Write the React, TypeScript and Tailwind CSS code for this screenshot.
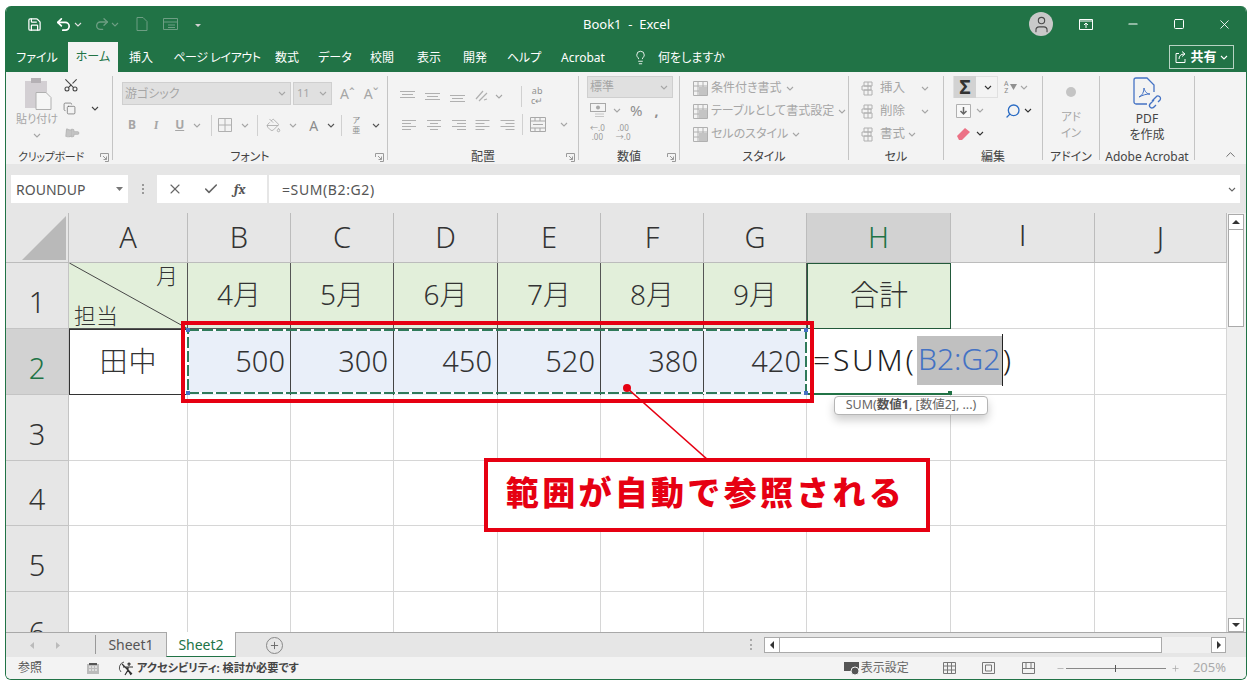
import React from "react";
import {
  ChevronUp,
  Copy,
  Lightbulb,
  Minus,
  PaintBucket,
  Paintbrush,
  Plus,
  Redo2,
  Save,
  Scissors,
  Search,
  Square,
  Undo2,
  User,
  X,
  Check,
} from "lucide-react";

const Chev = ({ c = "#a6a6a6" }: { c?: string }) => (
  <svg width="8" height="5" viewBox="0 0 8 5" className="shrink-0">
    <path d="M1 1l3 3 3-3" fill="none" stroke={c} strokeWidth="1.1" />
  </svg>
);

const Launcher = () => (
  <svg width="9" height="9" viewBox="0 0 9 9" className="absolute right-[3px] top-[8px]">
    <path d="M.5 4V.5H8.500V8.500H5M3 3l3.500 3.500M6.500 3.500v3h-3" fill="none" stroke="#9a9a9a" />
  </svg>
);

// three or so horizontal strokes, used by all the alignment buttons
const Lines = ({ rows, w = 15 }: { rows: number[][]; w?: number }) => (
  <svg width={w} height="13" viewBox="0 0 15 13" className="shrink-0">
    {rows.map((r, i) => (
      <path key={i} d={`M${r[0]} ${r[2]}H${r[1]}`} stroke="#b0b0b0" strokeWidth="1" />
    ))}
  </svg>
);

const top3 = [[0, 15, 1.5], [2, 13, 4.500], [0, 15, 7.500]];
const mid3 = [[0, 15, 3.500], [2, 13, 6.500], [0, 15, 9.500]];
const low3 = [[0, 15, 5.500], [2, 13, 8.500], [0, 15, 11.500]];
const left4 = [[0, 14, 2.500], [0, 9, 5.500], [0, 14, 8.500], [0, 9, 11.500]];
const center4 = [[0, 14, 2.500], [3, 11, 5.500], [0, 14, 8.500], [3, 11, 11.500]];
const right4 = [[0, 14, 2.500], [5, 14, 5.500], [0, 14, 8.500], [5, 14, 11.500]];

const Group = ({
  w,
  label,
  launcher,
  labelClass = "text-[12px]",
  children,
}: {
  w: string;
  label: string;
  launcher?: boolean;
  labelClass?: string;
  children: React.ReactNode;
}) => (
  <div className={`${w} h-[84px] shrink-0 border-r border-[#c4c4c4]`}>
    <div className="h-[69px]">{children}</div>
    <div className={`relative h-[24px] whitespace-nowrap text-center leading-[24px] text-[#444] ${labelClass}`}>
      {label}
      {launcher && <Launcher />}
    </div>
  </div>
);

const tabs = [
  { t: "ファイル", c: "w-[62px]" },
  { t: "ホーム", c: "w-[50px] h-[30px] bg-[#f3f3f3] text-[#217346]" },
  { t: "挿入", c: "w-[46px]" },
  { t: "ページ レイアウト", c: "ml-[3px] w-[100px] tracking-[-0.4px]" },
  { t: "数式", c: "w-[40px]" },
  { t: "データ", c: "w-[56px]" },
  { t: "校閲", c: "w-[38px]" },
  { t: "表示", c: "w-[56px]" },
  { t: "開発", c: "w-[36px]" },
  { t: "ヘルプ", c: "w-[62px]" },
  { t: "Acrobat", c: "w-[56px]" },
];

const TitleBar = () => (
  <div className="flex h-[36px] items-center bg-[#217346] text-white">
    <Save size={15} className="ml-[21px]" strokeWidth={2} />
    <Undo2 size={17} className="ml-[13px]" strokeWidth={2.4} />
    <div className="ml-[2px]"><Chev c="#e0e0e0" /></div>
    <Redo2 size={16} className="ml-[12px] text-[#6d9e83]" />
    <div className="ml-[1px]"><Chev c="#6d9e83" /></div>
    <svg width="12" height="14" viewBox="0 0 12 14" className="ml-[17px]">
      <path d="M1 .5h6l4 4v9H1z" fill="none" stroke="#6d9e83" />
    </svg>
    <svg width="15" height="12" viewBox="0 0 15 12" className="ml-[15px]">
      <path d="M.5.5h14v11H.5zM.5 4h14M5 7h7M5 9.500h7" fill="none" stroke="#6d9e83" />
    </svg>
    <svg width="6" height="6" viewBox="0 0 6 6" className="ml-[17px]">
      <path d="M0 1h6M0 3h6L3 6z" fill="#d0d0d0" />
    </svg>
    <span className="ml-[382px] w-[90px] whitespace-pre pt-[2px] text-[13px]">Book1  -  Excel</span>
    <div className="ml-[356px] flex h-[24px] w-[24px] items-center justify-center rounded-full bg-[#c9c9c9]">
      <User size={19} className="text-[#4a4a4a]" strokeWidth={1.4} />
    </div>
    <svg width="14" height="11" viewBox="0 0 14 11" className="ml-[26px]">
      <path d="M.5.500h13v10H.5zM.5 2h13M7 9V4M5 6l2-2 2 2" fill="none" stroke="#fff" />
    </svg>
    <Minus size={14} className="ml-[33px]" />
    <Square size={12} className="ml-[33px]" />
    <X size={15} className="ml-[32px]" strokeWidth={1.4} />
  </div>
);

const TabBar = () => (
  <div className="flex h-[30px] items-end bg-[#217346] text-[12px] text-white">
    {tabs.map((t) => (
      <div key={t.t} className={`flex h-[29px] items-center justify-center whitespace-pre ${t.c}`}>
        {t.t}
      </div>
    ))}
    <div className="flex h-[29px] items-center">
      <Lightbulb size={15} className="ml-[22px]" strokeWidth={1.4} />
      <span className="ml-[10px] w-[58px] whitespace-nowrap">何をしますか</span>
    </div>
    <div className="mb-[3px] ml-[453px] flex h-[24px] w-[65px] items-center justify-center gap-[3px] border border-[#b7d3c3]">
      <svg width="12" height="12" viewBox="0 0 12 12">
        <path d="M4 2.500H1v9h9V8M4 8c0-3 2-5 5-5M7 .5l3 2.500-3 2.500" fill="none" stroke="#fff" />
      </svg>
      <span className="text-[13px] font-bold">共有</span>
      <Chev c="#ffffff" />
    </div>
  </div>
);

const Ribbon = () => (
  <div className="flex h-[92px] bg-[#f3f3f3] pt-[4px] text-[#a6a6a6]">
    <Group w="w-[107px]" label="クリップボード" launcher labelClass="pr-[16px] text-[11px] tracking-[-0.3px]">
      <div className="flex">
        <div className="ml-[10px] flex w-[42px] flex-col items-center">
          <svg width="28" height="33" viewBox="0 0 28 33" className="ml-[3px] mt-[1px]">
            <rect x="0" y="4" width="22" height="27" fill="#d3cfd3" />
            <rect x="6" y="1" width="10" height="5" fill="#b5b1b5" />
            <path d="M11 15.500h10l5 5v12H11z" fill="#f6f6f6" stroke="#b0b0b0" />
          </svg>
          <span className="mt-[2px] whitespace-nowrap text-[11px] leading-[14px]">貼り付け</span>
          <div className="mt-[7px]"><Chev /></div>
        </div>
        <div className="ml-[5px] flex w-[36px] flex-col pt-[1px]">
          <Scissors size={16} className="-rotate-90 text-[#444]" strokeWidth={1.6} />
          <div className="mt-[8px] flex items-center">
            <Copy size={15} className="text-[#666]" strokeWidth={1.3} />
            <div className="ml-[15px]"><Chev c="#444" /></div>
          </div>
          <Paintbrush size={14} className="ml-[1px] mt-[10px] rotate-45 text-[#b9b9b9]" fill="#c4c4c4" />
        </div>
      </div>
    </Group>

    <Group w="w-[275px]" label="フォント" launcher>
      <div className="flex items-center pl-[9px] pt-[6px]">
        <div className="flex h-[23px] w-[169px] items-center justify-between border border-[#cfcfcf] bg-[#e0e0e0] pl-[2px] pr-[4px] text-[12px]">
          游ゴシック
          <Chev />
        </div>
        <div className="ml-[2px] flex h-[23px] w-[39px] items-center justify-between border border-[#cfcfcf] bg-[#e0e0e0] pl-[3px] pr-[4px] text-[11px]">
          11
          <Chev />
        </div>
        <span className="ml-[8px] text-[14px]">Aˆ</span>
        <span className="ml-[9px] text-[14px]">Aˇ</span>
      </div>
      <div className="mt-[9px] flex h-[22px] items-center pl-[15px] text-[12px] font-bold">
        <span>B</span>
        <span className="ml-[18px] font-serif italic">I</span>
        <span className="ml-[17px] underline">U</span>
        <div className="ml-[9px]"><Chev /></div>
        <div className="ml-[10px] h-[21px] border-l border-[#d0d0d0]" />
        <svg width="14" height="14" viewBox="0 0 14 14" className="ml-[6px]">
          <path d="M.5.500h13v13H.5zM7 .5v13M.5 7h13" fill="none" stroke="#b0b0b0" />
        </svg>
        <div className="ml-[9px]"><Chev /></div>
        <div className="ml-[8px] h-[21px] border-l border-[#d0d0d0]" />
        <PaintBucket size={15} className="ml-[8px]" strokeWidth={1.3} />
        <div className="ml-[8px]"><Chev /></div>
        <span className="ml-[12px] text-[14px] font-normal text-[#8c8c8c]">A</span>
        <div className="ml-[9px]"><Chev c="#555" /></div>
        <div className="ml-[6px] h-[21px] border-l border-[#d0d0d0]" />
        <span className="ml-[10px] flex flex-col items-center text-[8px] font-normal leading-[10px] text-[#888]">
          <span>ア</span>
          <span>亜</span>
        </span>
        <div className="ml-[12px]"><Chev c="#555" /></div>
      </div>
    </Group>

    <Group w="w-[191px]" label="配置" launcher>
      <div className="flex h-[34px] items-center pl-[12px] pt-[6px]">
        <Lines rows={top3} />
        <div className="ml-[10px]"><Lines rows={mid3} /></div>
        <div className="ml-[10px]"><Lines rows={low3} /></div>
        <svg width="15" height="14" viewBox="0 0 15 14" className="ml-[9px]">
          <path d="M2 10L9 2M5 12l8-8M10 11l3-1" fill="none" stroke="#b0b0b0" strokeWidth="1.2" />
        </svg>
        <div className="ml-[6px]"><Chev /></div>
        <div className="ml-[18px] h-[21px] border-l border-[#d0d0d0]" />
        <span className="ml-[9px] flex flex-col items-center text-[9px] leading-[10px] text-[#909090]">
          <span>ab</span>
          <span>c↵</span>
        </span>
      </div>
      <div className="mt-[2px] flex h-[24px] items-center pl-[14px]">
        <Lines rows={left4} />
        <div className="ml-[10px]"><Lines rows={center4} /></div>
        <div className="ml-[10px]"><Lines rows={right4} /></div>
        <div className="ml-[8px]"><Lines rows={left4} w={16} /></div>
        <div className="ml-[9px]"><Lines rows={right4} w={16} /></div>
        <div className="ml-[6px] h-[21px] border-l border-[#d0d0d0]" />
        <svg width="16" height="15" viewBox="0 0 16 15" className="ml-[7px]">
          <path d="M.5.500h15v14H.5zM.5 4h15M.5 11h15M5 4V.5M10 4V.5M5 14.500V11M10 14.500V11M3 7.500h10" fill="none" stroke="#a8a8a8" />
        </svg>
        <div className="ml-[14px]"><Chev /></div>
      </div>
    </Group>

    <Group w="w-[101px]" label="数値" launcher>
      <div className="ml-[8px] flex h-[22px] w-[86px] items-center justify-between border border-[#cfcfcf] bg-[#e0e0e0] pl-[2px] pr-[4px] text-[12px]">
        標準
        <Chev />
      </div>
      <div className="mt-[1px] flex h-[23px] items-center pl-[11px]">
        <svg width="16" height="15" viewBox="0 0 16 15">
          <rect x=".5" y=".5" width="15" height="8" fill="none" stroke="#a8a8a8" />
          <circle cx="8" cy="4.500" r="2" fill="#a8a8a8" />
          <path d="M5 11h9M5 13.500h9" stroke="#c6c6c6" />
        </svg>
        <div className="ml-[7px]"><Chev /></div>
        <span className="ml-[9px] text-[15px] text-[#8e8e8e]">%</span>
        <span className="ml-[12px] text-[14px] font-bold text-[#8e8e8e]">,</span>
      </div>
      <div className="mt-[1px] flex items-center pl-[11px] text-center text-[8px] leading-[9px] text-[#999]">
        <span>
          ←.0
          <br />
          .00
        </span>
        <span className="ml-[11px]">
          .00
          <br />
          →.0
        </span>
      </div>
    </Group>

    <Group w="w-[169px]" label="スタイル">
      <div className="flex flex-col gap-[1px] pl-[13px] pt-[1px] text-[12px]">
        {["条件付き書式", "テーブルとして書式設定", "セルのスタイル"].map((t) => (
          <div key={t} className="flex h-[22px] items-center whitespace-nowrap">
            <svg width="15" height="15" viewBox="0 0 15 15" className="mr-[3px] shrink-0">
              <path d="M.5.500h14v14H.5zM.5 5h14M.5 10h14M5 .5v14M10 .5v14" fill="none" stroke="#b0b0b0" />
              <rect x="6" y="6" width="8" height="8" fill="#c4c4c4" />
            </svg>
            <span>{t}</span>
            <div className="ml-[4px]"><Chev /></div>
          </div>
        ))}
      </div>
    </Group>

    <Group w="w-[95px]" label="セル">
      <div className="flex flex-col gap-[1px] pl-[12px] pt-[1px] text-[12.500px]">
        {["挿入", "削除", "書式"].map((t, i) => (
          <div key={t} className="flex h-[22px] items-center whitespace-nowrap">
            <svg width="15" height="15" viewBox="0 0 15 15" className="mr-[4px] shrink-0">
              <path d="M3 1h8v4H3zM1 5h9v4H1zM3 9h8v5H3zM7 1v13" fill="none" stroke="#b0b0b0" />
            </svg>
            <span>{t}</span>
            <div className={i < 2 ? "ml-[16px]" : "ml-[3px]"}><Chev /></div>
          </div>
        ))}
      </div>
    </Group>

    <Group w="w-[99px]" label="編集">
      <div className="ml-[9px] flex h-[22px] items-center">
        <div className="flex h-[22px] w-[45px] items-center border border-[#e0e0e0]">
          <div className="flex h-[22px] w-[22px] items-center justify-center bg-[#d2d2d2] text-[19px] font-bold leading-none text-[#333]">
            Σ
          </div>
          <div className="ml-[8px]"><Chev c="#333" /></div>
        </div>
        <span className="ml-[6px] text-center text-[7px] leading-[7px] text-[#888]">
          A
          <br />
          Z
        </span>
        <svg width="7" height="6" viewBox="0 0 7 6" className="ml-[2px]"><path d="M0 0h7L3.500 6z" fill="#909090" /></svg>
        <div className="ml-[3px]"><Chev /></div>
      </div>
      <div className="ml-[12px] mt-[1px] flex h-[23px] items-center">
        <svg width="15" height="14" viewBox="0 0 15 14">
          <path d="M.5.500h14v13H.5z" fill="#f8f8f8" stroke="#b0b0b0" />
          <path d="M7.500 3v7M4.500 7l3 3 3-3" fill="none" stroke="#666" strokeWidth="1.5" />
        </svg>
        <div className="ml-[5px]"><Chev /></div>
        <Search size={16} className="ml-[21px] -scale-x-100 text-[#2b6cc4]" strokeWidth={2} />
        <div className="ml-[3px]"><Chev c="#333" /></div>
      </div>
      <div className="ml-[13px] flex h-[22px] items-center">
        <svg width="14" height="13" viewBox="0 0 14 13">
          <path d="M0 9l8-8 5 4-8 8H2z" fill="#ec7185" />
        </svg>
        <div className="ml-[5px]"><Chev c="#333" /></div>
      </div>
    </Group>

    <Group w="w-[57px]" label="アドイン">
      <div className="flex flex-col items-center">
        <div className="mt-[11px] h-[10px] w-[10px] rounded-full bg-[#c4c4c4]" />
        <span className="mt-[12px] text-center text-[11.500px] leading-[16px]">
          アド
          <br />
          イン
        </span>
      </div>
    </Group>

    <Group w="w-[95px]" label="Adobe Acrobat">
      <div className="flex flex-col items-center">
        <svg width="29" height="32" viewBox="0 0 29 32" className="mt-[1px]">
          <path d="M14 27H3a2 2 0 0 1-2-2V3a2 2 0 0 1 2-2h11l7 7v7" fill="none" stroke="#4472c4" strokeWidth="1.3" />
          <path d="M6 20c3-1 5-5 5-9 1 4 3 6 6 6-4 0-7 1-11 3z" fill="none" stroke="#4472c4" />
          <path d="M19 24l4-4a2.500 2.500 0 0 1 4 3l-2 2M21 23l-4 4a2.500 2.500 0 0 0 4 3l2-2" fill="none" stroke="#4472c4" strokeWidth="1.300" />
        </svg>
        <span className="mt-[2px] text-center text-[12px] leading-[16px] text-[#444]">
          PDF
          <br />
          を作成
        </span>
      </div>
    </Group>

    <div className="flex flex-1 items-end justify-end pb-[2px] pr-[8px]">
      <ChevronUp size={15} className="text-[#666]" strokeWidth={1.5} />
    </div>
  </div>
);

const FormulaBar = () => (
  <div className="flex h-[49px] items-start bg-[#e6e6e6] pl-[5px] pt-[11px]">
    <div className="flex h-[28px] w-[117px] items-center justify-between bg-white pl-[5px] pr-[5px] text-[14px] text-[#555]">
      ROUNDUP
      <svg width="7" height="4" viewBox="0 0 7 4"><path d="M0 0h7L3.500 4z" fill="#777" /></svg>
    </div>
    <div className="ml-[13px] flex h-[28px] w-[4px] flex-col items-center justify-center gap-[2px]">
      <i className="h-[2px] w-[2px] bg-[#999]" />
      <i className="h-[2px] w-[2px] bg-[#999]" />
      <i className="h-[2px] w-[2px] bg-[#999]" />
    </div>
    <div className="ml-[12px] flex h-[28px] w-[110px] items-center bg-white text-[#666]">
      <X size={16} className="ml-[10px]" strokeWidth={1.6} />
      <Check size={16} className="ml-[20px]" strokeWidth={2.4} />
      <span className="ml-[15px] font-serif text-[14px] font-bold italic text-[#555]">fx</span>
    </div>
    <div className="ml-[2px] flex h-[28px] w-[971px] items-center justify-between bg-white pl-[13px] pr-[4px] text-[14px] tracking-[0.6px] text-[#555]">
      =SUM(B2:G2)
      <Chev c="#666" />
    </div>
  </div>
);

const colsTop = ["B", "C", "D", "E", "F", "G"];
const months = ["4月", "5月", "6月", "7月", "8月", "9月"];
const values = ["500", "300", "450", "520", "380", "420"];
const plainRows = ["3", "4", "5"];
const plainCols = [0, 1, 2, 3, 4, 5, 6, 7, 8, 9];

const head = "flex items-center justify-center border-b border-r border-[#bcbcbc] bg-[#e6e6e6] pb-[3px] text-[29px] leading-none text-[#333]";
const rowHead = "flex items-center justify-center border-b border-r border-[#c4c4c4] bg-[#e6e6e6] pt-[11px] text-[29px] leading-none text-[#333]";
const blank = "border-b border-r border-[#d6d6d6] bg-white";

const Sheet = () => (
  <div className="relative h-[419px] w-[1221px] shrink-0 overflow-hidden">
    <div className="grid h-[419px] grid-cols-[63px_119px_103px_103px_104px_103px_103px_103px_144px_144px_132px] grid-rows-[50px_66px_66px_66px_65px_66px_40px] font-light">
      <div className="flex items-center justify-center border-b border-r border-[#bcbcbc] bg-[#e6e6e6]">
        <svg width="44" height="44" viewBox="0 0 44 44" className="ml-[13px] mt-[1px]">
          <path d="M44 0v44H0z" fill="#b9b9b9" />
        </svg>
      </div>
      <div className={head}>A</div>
      {colsTop.map((c) => (
        <div key={c} className={head}>{c}</div>
      ))}
      <div className="flex items-center justify-center border-b border-r border-[#bcbcbc] bg-[#d2d2d2] pb-[3px] text-[29px] leading-none text-[#217346]">H</div>
      <div className={`${head} font-['Roboto',sans-serif]`}>I</div>
      <div className={head}>J</div>

      <div className={rowHead}>1</div>
      <div className="relative border-b border-r border-[#555] bg-[#e2efda] text-[22px] leading-none text-[#333]">
        <svg viewBox="0 0 119 66" className="absolute inset-0 h-full w-full">
          <path d="M0 0L119 66" stroke="#444" />
        </svg>
        <div className="flex h-full flex-col justify-between pb-[2px] pl-[5px] pr-[9px] pt-[1px]">
          <span className="self-end">月</span>
          <span>担当</span>
        </div>
      </div>
      {months.map((m) => (
        <div key={m} className="flex items-center justify-center border-b border-r border-[#555] bg-[#e2efda] pb-[3px] text-[28px] leading-none text-[#333]">{m}</div>
      ))}
      <div className="flex items-center justify-center border border-[#22593a] bg-[#e2efda] pb-[3px] text-[29px] leading-none text-[#333]">合計</div>
      <div className={blank} />
      <div className={blank} />

      <div className="flex items-center justify-center border-b border-r border-[#c4c4c4] bg-[#d2d2d2] pt-[11px] text-[29px] leading-none text-[#217346]">2</div>
      <div className="flex items-center justify-center border border-[#333] bg-white pb-[3px] text-[28px] leading-none tracking-[1px] text-[#333]">田中</div>
      {values.map((v) => (
        <div key={v} className="flex items-center justify-end border-r border-[#444] bg-[#e9eff9] pb-[4px] pr-[5px] text-[29px] leading-none text-[#333]">{v}</div>
      ))}
      <div className="flex items-center overflow-visible whitespace-nowrap border-b-2 border-[#217346] bg-white pb-[2px] pl-[6px] text-[30px] leading-none text-[#222]">
        <span className="tracking-[2.800px]">=SUM(</span>
        <span className="z-10 flex h-[49px] w-[85px] shrink-0 items-center justify-center bg-[#c0c0c0] pb-[2px] text-[#4472c4]">B2:G2</span>
        <span className="z-10 h-[52px] w-[1px] shrink-0 bg-[#222]" />
        <span className="z-10">)</span>
      </div>
      <div className={blank} />
      <div className={blank} />

      {plainRows.map((r) => (
        <React.Fragment key={r}>
          <div className={rowHead}>{r}</div>
          {plainCols.map((c) => (
            <div key={c} className={blank} />
          ))}
        </React.Fragment>
      ))}
      <div className="flex items-start justify-center overflow-hidden border-r border-[#c4c4c4] bg-[#e6e6e6] pt-[25px] text-[29px] leading-none text-[#333]">6</div>
      {plainCols.map((c) => (
        <div key={c} className="border-r border-[#d6d6d6] bg-white" />
      ))}
    </div>

    {/* marching ants, callout line */}
    <svg viewBox="0 0 1221 419" className="absolute inset-0 h-[419px] w-[1221px]">
      <rect x="182" y="117" width="618" height="63" fill="none" stroke="#ffffff" strokeWidth="2" />
      <rect x="182" y="117" width="618" height="63" fill="none" stroke="#2f7a5a" strokeWidth="2" strokeDasharray="11 3" />
      <rect x="180" y="115" width="4" height="4" fill="#4472c4" />
      <rect x="798" y="115" width="4" height="4" fill="#4472c4" />
      <rect x="180" y="178" width="4" height="4" fill="#4472c4" />
      <rect x="798" y="178" width="4" height="4" fill="#4472c4" />
      <rect x="942" y="178" width="4" height="4" fill="#217346" />
      <path d="M621 175L702 247" stroke="#e60012" strokeWidth="1.6" />
      <circle cx="621" cy="175" r="4" fill="#e60012" />
    </svg>

    <div className="absolute left-[175px] top-[108px] h-[82px] w-[633px] border-[4px] border-[#e60012]" />

    <div className="absolute left-[828px] top-[183px] flex h-[19px] w-[154px] items-center justify-center whitespace-nowrap rounded-[4px] border border-[#b5b5b5] bg-white text-[12.500px] text-[#666] shadow-[0_5px_10px_rgba(0,0,0,0.2)]">
      SUM(<b className="text-[#555]">数値1</b>, [数値2], ...)
    </div>

    <div className="absolute left-[478px] top-[245px] flex h-[74px] w-[446px] items-center justify-center border-[4px] border-[#e60012] bg-white pb-[6px] pr-[3px] text-[33px] font-black leading-none tracking-[3.300px] text-[#e60012] [font-feature-settings:normal]">
      範囲が自動で参照される
    </div>
  </div>
);

const VScroll = () => (
  <div className="flex h-[419px] w-[19px] flex-col bg-[#f0f0f0] pl-[1px] pr-[2px] pt-[1px]">
    <div className="flex h-[16px] w-[16px] items-center justify-center border border-[#aaa] bg-white">
      <svg width="8" height="4" viewBox="0 0 8 4"><path d="M0 4h8L4 0z" fill="#333" /></svg>
    </div>
    <div className="h-[97px] w-[16px] border border-t-0 border-[#aaa] bg-white" />
    <div className="flex-1" />
    <div className="flex h-[14px] w-[16px] items-center justify-center border border-[#aaa] bg-white">
      <svg width="8" height="4" viewBox="0 0 8 4"><path d="M0 0h8L4 4z" fill="#333" /></svg>
    </div>
  </div>
);

const SheetTabs = () => (
  <div className="flex h-[25px] items-start border-t border-[#a8a8a8] bg-[#e6e6e6] text-[14px] text-[#555]">
    <svg width="4" height="7" viewBox="0 0 4 7" className="ml-[24px] mt-[9px]"><path d="M4 0v7L0 3.500z" fill="#bbb" /></svg>
    <svg width="4" height="7" viewBox="0 0 4 7" className="ml-[22px] mt-[9px]"><path d="M0 0v7l4-3.500z" fill="#bbb" /></svg>
    <div className="ml-[35px] mt-[2px] h-[19px] border-l border-[#999]" />
    <div className="flex h-[23px] w-[70px] items-center justify-center">Sheet1</div>
    <div className="-mt-[1px] flex h-[25px] w-[70px] items-center justify-center border-x border-b border-x-[#a8a8a8] border-b-[#217346] bg-white text-[#217346]">Sheet2</div>
    <div className="ml-[30px] mt-[4px] flex h-[17px] w-[17px] items-center justify-center rounded-full border border-[#888]">
      <Plus size={11} className="text-[#666]" />
    </div>
    <div className="ml-[466px] mt-[6px] flex h-[11px] w-[4px] flex-col items-center justify-between">
      <i className="h-[2px] w-[2px] bg-[#aaa]" />
      <i className="h-[2px] w-[2px] bg-[#aaa]" />
      <i className="h-[2px] w-[2px] bg-[#aaa]" />
    </div>
    <div className="ml-[11px] mt-[4px] flex h-[16px] items-stretch">
      <div className="flex w-[16px] items-center justify-center border border-[#aaa] bg-white">
        <svg width="4" height="8" viewBox="0 0 4 8"><path d="M4 0v8L0 4z" fill="#333" /></svg>
      </div>
      <div className="w-[382px] border-y border-r border-[#aaa] bg-white" />
      <div className="w-[49px] bg-[#f0f0f0]" />
      <div className="flex w-[15px] items-center justify-center border border-[#aaa] bg-white">
        <svg width="4" height="8" viewBox="0 0 4 8"><path d="M0 0v8l4-4z" fill="#333" /></svg>
      </div>
    </div>
  </div>
);

const StatusBar = () => (
  <div className="flex h-[22px] items-center whitespace-nowrap bg-[#f3f3f3] pr-[20px] text-[12px] text-[#555]">
    <span className="ml-[12px] w-[26px]">参照</span>
    <svg width="12" height="12" viewBox="0 0 12 12" className="ml-[43px]">
      <path d="M0 2h12v10H0z" fill="#bbb" />
      <path d="M2 1h8v2H2z" fill="#555" />
      <path d="M2 5h2M5 5h2M8 5h2M2 8h2M5 8h2M8 8h2" stroke="#fff" />
    </svg>
    <svg width="16" height="15" viewBox="0 0 16 15" className="ml-[19px]">
      <path d="M6 1a6 6 0 0 0-3 10" fill="none" stroke="#555" />
      <path d="M10 3a1 1 0 1 1 0 .1M5 6h10M10 6v3l-3 5M10 9l3 5M4 3l10 10" fill="none" stroke="#333" strokeWidth="1.200" />
    </svg>
    <span className="ml-[3px] text-[11.200px] font-bold text-[#444]">アクセシビリティ: 検討が必要です</span>
    <div className="ml-auto flex items-center">
      <svg width="16" height="16" viewBox="0 0 16 16">
        <path d="M0 2h15v9H0z" fill="#555" />
        <circle cx="11" cy="11" r="4" fill="#555" stroke="#f3f3f3" />
      </svg>
      <span className="ml-[1px] text-[12px] text-[#666]">表示設定</span>
    </div>
    <svg width="13" height="12" viewBox="0 0 13 12" className="ml-[34px]">
      <path d="M.5.500h12v11H.5zM4.500.5v11M8.500.5v11M.5 4h12M.5 8h12" fill="none" stroke="#777" />
    </svg>
    <svg width="13" height="12" viewBox="0 0 13 12" className="ml-[26px]">
      <path d="M.5.500h12v11H.5zM3.500 3h6v6h-6z" fill="none" stroke="#777" />
    </svg>
    <svg width="13" height="12" viewBox="0 0 13 12" className="ml-[27px]">
      <path d="M.5.500h12v11H.5zM.5 6.500h12M4 .5v6M9 .5v6" fill="none" stroke="#777" />
    </svg>
    <Minus size={9} className="ml-[21px] text-[#aaa]" />
    <div className="ml-[1px] flex h-[7px] w-[100px] items-center justify-center bg-[linear-gradient(#888,#888)] bg-[length:100%_1px] bg-center bg-no-repeat">
      <i className="h-[7px] w-[1px] bg-[#555]" />
    </div>
    <Plus size={9} className="ml-[5px] text-[#aaa]" />
    <span className="ml-[13px] text-[13px] text-[#aaa]">205%</span>
  </div>
);

export default function App() {
  return (
    <div className="h-[686px] w-[1253px] overflow-hidden bg-white pl-[5px] pt-[6px] font-['Noto_Sans','Noto_Sans_CJK_JP',sans-serif] [font-feature-settings:'palt']">
      <div className="h-[674px] w-[1242px] overflow-hidden rounded-[6px] border-x border-b border-[#217346]">
        <TitleBar />
        <TabBar />
        <Ribbon />
        <FormulaBar />
        <div className="flex h-[419px]">
          <Sheet />
          <VScroll />
        </div>
        <SheetTabs />
        <StatusBar />
      </div>
    </div>
  );
}
